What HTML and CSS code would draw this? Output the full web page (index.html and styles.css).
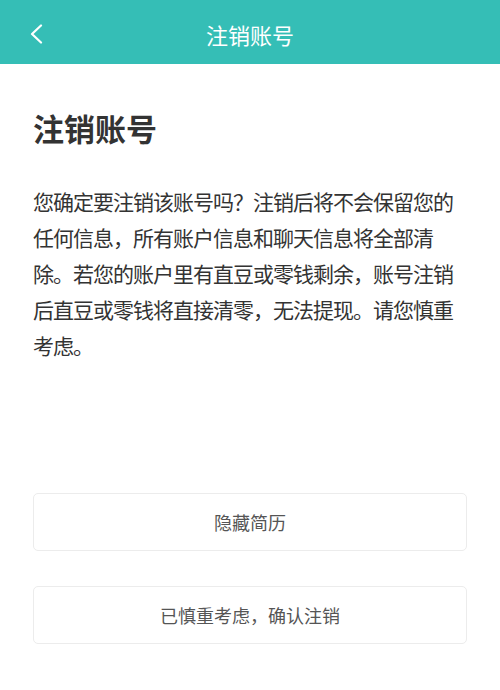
FILE: index.html
```html
<!DOCTYPE html>
<html lang="zh">
<head>
<meta charset="utf-8">
<title>注销账号</title>
<link rel="stylesheet" href="styles.css">
</head>
<body>
<header class="topbar">
  <span class="back">
    <svg width="14" height="20" viewBox="0 0 14 20"><path d="M12 1.5 L3 10 L12 18.5" fill="none" stroke="#fff" stroke-width="2.2" stroke-linecap="round" stroke-linejoin="round"/></svg>
  </span>
  <span class="topbar-title">注销账号</span>
</header>
<main class="content">
  <h1 class="heading">注销账号</h1>
  <p class="desc">您确定要注销该账号吗？注销后将不会保留您的任何信息，所有账户信息和聊天信息将全部清除。若您的账户里有直豆或零钱剩余，账号注销后直豆或零钱将直接清零，无法提现。请您慎重考虑。</p>
  <div class="actions">
    <div class="btn">隐藏简历</div>
    <div class="btn">已慎重考虑，确认注销</div>
  </div>
</main>
</body>
</html>
```
FILE: styles.css
```css
* { box-sizing: border-box; }
html, body { margin: 0; padding: 0; }
body {
  width: 500px;
  height: 690px;
  background: #fff;
  font-family: "Noto Sans CJK SC", "Noto Sans", sans-serif;
  color: #333;
  overflow: hidden;
}
.topbar {
  position: relative;
  height: 64px;
  background: #35beb6;
  display: flex;
  align-items: center;
  justify-content: center;
}
.back {
  position: absolute;
  left: 29px;
  top: 24px;
  width: 14px;
  height: 20px;
  display: flex;
}
.topbar-title {
  color: #fff;
  font-size: 22px;
  line-height: 30px;
  margin-top: 4px;
}
.content {
  padding: 0 30px 0 33px;
}
.heading {
  margin: 44px 0 0;
  font-size: 31px;
  line-height: 40px;
  font-weight: 700;
  color: #333;
}
.desc {
  margin: 35px 0 0;
  font-size: 21px;
  letter-spacing: -1px;
  line-height: 36px;
  color: #333;
}
.actions {
  margin-top: 130px;
  margin-right: 3px;
  display: flex;
  flex-direction: column;
  gap: 35px;
}
.btn {
  height: 58px;
  border: 1px solid #ececec;
  border-radius: 5px;
  display: flex;
  align-items: center;
  justify-content: center;
  font-size: 18px;
  color: #555;
}
```
